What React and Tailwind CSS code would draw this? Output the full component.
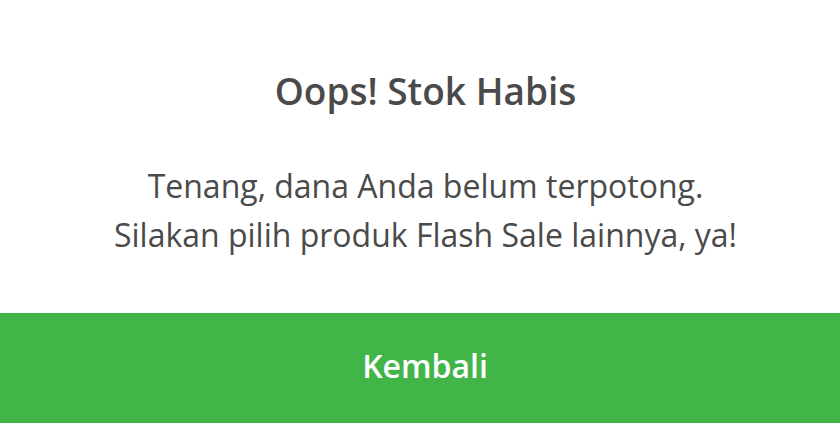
export default function App() {
  return (
    <div className="w-[840px] h-[440px] bg-white flex flex-col" style={{ fontFamily: '"Open Sans", sans-serif' }}>
      <div className="flex flex-col items-center pt-[66px] pl-[11px]">
        <h1 className="text-[37px] leading-[50px] font-semibold text-[#4a4a4a]">Oops! Stok Habis</h1>
        <p className="mt-[45px] text-[32px] leading-[49px] text-[#4a4a4a] text-center">
          Tenang, dana Anda belum terpotong.
          <br />
          Silakan pilih produk Flash Sale lainnya, ya!
        </p>
      </div>
      <div className="mt-auto mb-[17px] h-[110px] bg-[#42b549] flex items-center justify-center pb-[4px] pl-[10px]">
        <span className="text-[32px] font-semibold text-white">Kembali</span>
      </div>
    </div>
  );
}
